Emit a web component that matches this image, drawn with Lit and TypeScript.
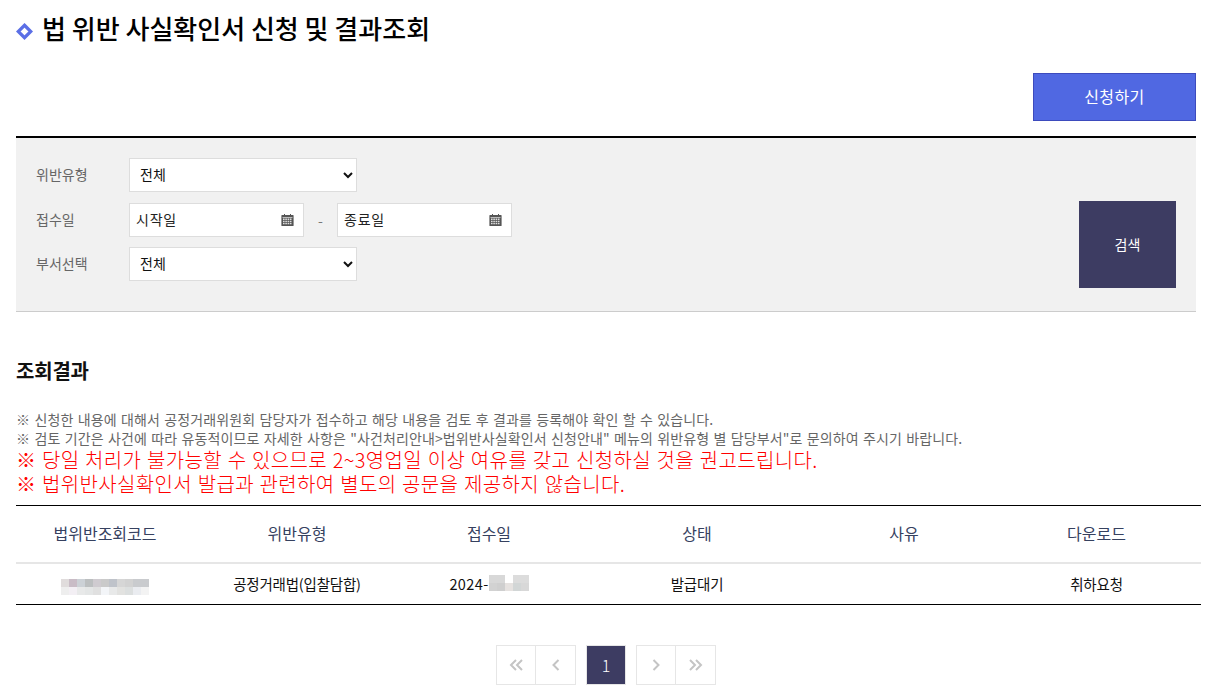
import { LitElement, html, css } from "lit";
import { customElement } from "lit/decorators.js";

const cal = html`<svg class="cal" width="13" height="13" viewBox="0 0 13 13"><path fill="#555" d="M1 2h2V1h1v1h5V1h1v1h2a.6.6 0 0 1 .6.6v9.8a.6.6 0 0 1-.6.6H1a.6.6 0 0 1-.6-.6V2.600A.6.6 0 0 1 1 2z"/><path fill="#fff" d="M1.500 4h10v.6h-10z"/><path fill="#ddd" d="M2 5.500h1.600V7H2zM4.300 5.500h1.600V7H4.300zM6.600 5.500h1.600V7H6.600zM8.900 5.500h1.600V7H8.900zM2 7.700h1.600v1.500H2zM4.300 7.700h1.600v1.500H4.300zM6.600 7.700h1.600v1.500H6.600zM8.900 7.700h1.600v1.500H8.900zM2 9.900h1.600v1.400H2zM4.300 9.900h1.600v1.400H4.300zM6.600 9.900h1.600v1.400H6.600zM8.900 9.900h1.600v1.400H8.900z"/></svg>`;

const chev = (d: string) => html`<svg width="16" height="14" viewBox="0 0 16 14" fill="none" stroke="#c4c4c4" stroke-width="2"><path d=${d}/></svg>`;

const blurA = [
  ["#e0dcdc", "#c9bcc6", "#ccd1d6", "#bcbfc0", "#cfcbd0", "#cacaca", "#bfc3ca", "#d6d6d6", "#d2d2d2", "#c9cbce", "#c9cbce"],
  ["#eeeeee", "#f3eff4", "#e8e9e9", "#e4e6e6", "#e0e0e0", "#f3f5f8", "#e8e9e9", "#e2e2e0", "#dcdfdf", "#eaecf0", "#f3f3f3"],
];
const blurB = [
  ["#d8d8d8", "#d8d8d8", "#ffffff", "#dcdcdc", "#dcdcdc"],
  ["#d2d2d2", "#cfcfcf", "#e6e2e0", "#d2d6d6", "#d8d8d8"],
];

@customElement("app-root")
export class AppRoot extends LitElement {
  static styles = css`
    :host { display: block; width: 1211px; height: 689px; overflow: hidden; background: #fff; font-family: "Noto Sans CJK KR", "Noto Sans", sans-serif; color: #222; }
    * { box-sizing: border-box; }
    .page { padding: 0 10px 0 16px; }
    .title { display: flex; align-items: center; gap: 9px; height: 60px; margin: 0; padding-bottom: 5px; font-size: 26px; font-weight: 500; color: #000; }
    .diamond { width: 17px; height: 17px; flex: none; margin-top: 7px; }
    .actions { display: flex; justify-content: flex-end; padding: 13px 5px 0 0; }
    .apply { width: 163px; height: 48px; border: 1px solid #3d4bbd; background: #5068e2; color: #fff; font: inherit; font-size: 16px; letter-spacing: 0.4px; padding-bottom: 3px; }
    .filter { width: 1180px; height: 176px; margin-top: 15px; border-top: 2px solid #000; border-bottom: 1px solid #ccc; background: #f1f1f1; display: flex; justify-content: space-between; padding: 20px 20px 0 20px; }
    .rows { display: flex; flex-direction: column; }
    .row { display: flex; align-items: center; height: 34px; margin-bottom: 11px; font-size: 14px; color: #666; }
    .row.sec { margin-bottom: 10px; }
    .row label { width: 93px; font-size: 14px; padding-bottom: 2px; }
    select { width: 228px; height: 34px; border: 1px solid #ddd; background: #fff; color: #111; font: inherit; font-size: 14px; padding: 0 6px 2px; border-radius: 0; }
    .date { width: 175px; height: 34px; border: 1px solid #ddd; background: #fff; display: flex; align-items: center; justify-content: space-between; padding: 0 9px 2px 6px; color: #222; font-size: 14px; letter-spacing: 0.8px; }
    .dash { width: 33px; text-align: center; color: #777; }
    .search { width: 97px; height: 87px; margin-top: 43px; border: 0; background: #3d3c62; color: #fff; font: inherit; font-size: 14px; padding-bottom: 3px; }
    .result { margin: 46px 0 0; height: 26px; font-size: 20px; line-height: 26px; font-weight: 700; color: #111; letter-spacing: -0.2px; }
    .notes { margin: 26px 0 0; }
    .small { font-size: 14px; line-height: 19px; height: 19px; color: #666; letter-spacing: 0.12px; word-spacing: 1px; white-space: nowrap; }
    .big { font-size: 20px; line-height: 24px; height: 24px; color: #ff0000; font-weight: 300; white-space: nowrap; letter-spacing: 0.36px; word-spacing: 0.83px; }
    .table { margin-top: 9px; border-top: 1px solid #000; border-bottom: 1px solid #000; }
    .tr { display: grid; grid-template-columns: 178px 206px 178px 238px 176px 209px; text-align: center; align-items: center; }
    .thead { height: 58px; padding-bottom: 2px; border-bottom: 2px solid #e6e6e6; font-size: 16px; color: #36415f; }
    .tbody { height: 40px; padding-bottom: 2px; font-size: 14.500px; color: #111; letter-spacing: -0.2px; }
    .blur { display: inline-grid; vertical-align: middle; }
    .code { margin-top: 6px; }
    .date-val { display: inline-flex; align-items: center; justify-content: center; letter-spacing: 0.4px; }
    .pager { display: flex; justify-content: center; margin: 40px 5px 0 0; gap: 10px; }
    .group { display: flex; }
    .pbtn { width: 40px; height: 40px; border: 1px solid #e6e6e6; background: #fff; display: flex; align-items: center; justify-content: center; }
    .pbtn + .pbtn { margin-left: -1px; width: 41px; }
    .cur { background: #3d3c62; color: #fff; font-size: 16px; font-weight: 300; }
  `;

  private blur(rows: string[][], cls = "") {
    return html`<span class="blur ${cls}" style="grid-template-columns: repeat(${rows[0].length}, 8px); grid-auto-rows: 8px">
      ${rows.flat().map((c) => html`<span style="background:${c}"></span>`)}
    </span>`;
  }

  render() {
    return html`<div class="page">
      <h1 class="title">
        <svg class="diamond" viewBox="0 0 17 17"><path d="M8.500 2.250 14.750 8.500 8.500 14.750 2.250 8.500Z" fill="none" stroke="#5b6fe6" stroke-width="3.200"/></svg>
        법 위반 사실확인서 신청 및 결과조회
      </h1>
      <div class="actions"><button class="apply">신청하기</button></div>
      <section class="filter">
        <div class="rows">
          <div class="row"><label>위반유형</label><select><option>전체</option></select></div>
          <div class="row sec"><label>접수일</label><div class="date">시작일${cal}</div><span class="dash">-</span><div class="date">종료일${cal}</div></div>
          <div class="row"><label>부서선택</label><select><option>전체</option></select></div>
        </div>
        <button class="search">검색</button>
      </section>
      <h2 class="result">조회결과</h2>
      <div class="notes">
        <div class="small">※ 신청한 내용에 대해서 공정거래위원회 담당자가 접수하고 해당 내용을 검토 후 결과를 등록해야 확인 할 수 있습니다.</div>
        <div class="small">※ 검토 기간은 사건에 따라 유동적이므로 자세한 사항은 "사건처리안내&gt;법위반사실확인서 신청안내" 메뉴의 위반유형 별 담당부서"로 문의하여 주시기 바랍니다.</div>
        <div class="big">※ 당일 처리가 불가능할 수 있으므로 2~3영업일 이상 여유를 갖고 신청하실 것을 권고드립니다.</div>
        <div class="big">※ 법위반사실확인서 발급과 관련하여 별도의 공문을 제공하지 않습니다.</div>
      </div>
      <div class="table">
        <div class="tr thead"><span>법위반조회코드</span><span>위반유형</span><span>접수일</span><span>상태</span><span>사유</span><span>다운로드</span></div>
        <div class="tr tbody">
          <span>${this.blur(blurA, "code")}</span>
          <span>공정거래법(입찰담합)</span>
          <span class="date-val">2024-${this.blur(blurB)}</span>
          <span>발급대기</span>
          <span></span>
          <span>취하요청</span>
        </div>
      </div>
      <nav class="pager">
        <div class="group">
          <div class="pbtn">${chev("M8 2 3 7l5 5M14 2 9 7l5 5")}</div>
          <div class="pbtn">${chev("M10.500 2 5.500 7l5 5")}</div>
        </div>
        <div class="pbtn cur">1</div>
        <div class="group">
          <div class="pbtn">${chev("M5.500 2l5 5-5 5")}</div>
          <div class="pbtn">${chev("M2 2l5 5-5 5M8 2l5 5-5 5")}</div>
        </div>
      </nav>
    </div>`;
  }
}
